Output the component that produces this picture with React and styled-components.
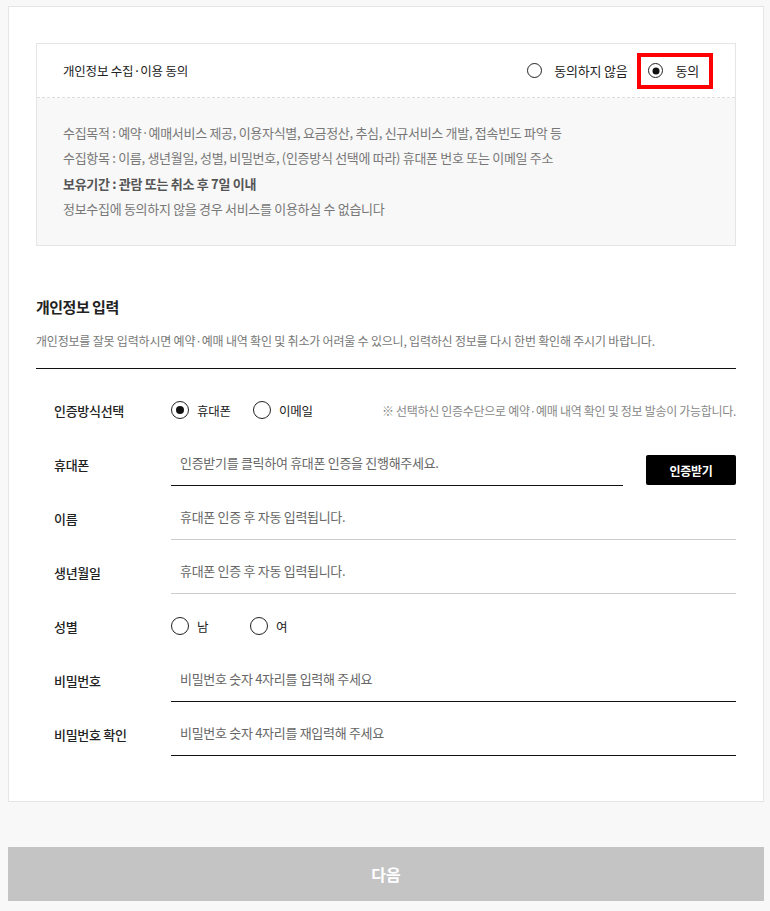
import React from "react";
import styled, { createGlobalStyle } from "styled-components";

const GlobalStyle = createGlobalStyle`
  html, body {
    margin: 0;
    padding: 0;
    background: #f8f8f8;
  }
  body {
    font-family: "Noto Sans CJK KR", "Noto Sans", sans-serif;
    color: #222;
  }
  * {
    box-sizing: border-box;
  }
`;

const Page = styled.div`
  padding: 6px 6px 10px 8px;
`;

const Panel = styled.div`
  background: #fff;
  border: 1px solid #e5e5e5;
  padding: 36px 27px 45px;
`;

/* 동의 박스 */
const AgreeBox = styled.div`
  border: 1px solid #e5e5e5;
`;

const AgreeHeader = styled.div`
  height: 54px;
  display: flex;
  align-items: center;
  justify-content: space-between;
  padding: 0 22px 0 26px;
  background: #fff;
  border-bottom: 1px dashed #ddd;
`;

const AgreeTitle = styled.span`
  font-size: 12.5px;
  letter-spacing: -0.2px;
  color: #222;
`;

const AgreeOptions = styled.div`
  display: flex;
  align-items: center;
  gap: 10px;
`;

const Option = styled.label`
  display: flex;
  align-items: center;
  gap: ${(p) => (p.$gap ? p.$gap : 12)}px;
  min-width: ${(p) => (p.$minWidth ? `${p.$minWidth}px` : "auto")};
  font-size: ${(p) => (p.$fs ? p.$fs : 12.5)}px;
  letter-spacing: -0.2px;
  color: #222;
  cursor: pointer;
`;

const Highlight = styled.div`
  display: flex;
  align-items: center;
  height: 36px;
  padding: 0 10px 0 7px;
  border: 4px solid #ff0000;
`;

const Circle = styled.span`
  position: relative;
  flex: none;
  width: ${(p) => p.$size}px;
  height: ${(p) => p.$size}px;
  border-radius: 50%;
  border: 1px solid #222;
  background: #fff;

  &::after {
    content: "";
    display: ${(p) => (p.$checked ? "block" : "none")};
    position: absolute;
    top: 50%;
    left: 50%;
    width: ${(p) => Math.round(p.$size * 0.47)}px;
    height: ${(p) => Math.round(p.$size * 0.47)}px;
    border-radius: 50%;
    background: #111;
    transform: translate(-50%, -50%);
  }
`;

const AgreeBody = styled.div`
  background: #f8f8f8;
  padding: 22px 26px 24px;
`;

const InfoLine = styled.p`
  margin: 0;
  font-size: 13px;
  line-height: 25.3px;
  letter-spacing: -0.3px;
  color: ${(p) => (p.$bold ? "#555" : "#777")};
  font-weight: ${(p) => (p.$bold ? 700 : 400)};
`;

/* 개인정보 입력 */
const Section = styled.div`
  margin-top: 51px;
`;

const SectionTitle = styled.h2`
  margin: 0;
  font-size: 15px;
  line-height: 20px;
  font-weight: 700;
  letter-spacing: -0.5px;
  color: #222;
`;

const SectionDesc = styled.p`
  margin: 15px 0 0;
  font-size: 12px;
  line-height: 18px;
  letter-spacing: -0.2px;
  color: #777;
  padding-bottom: 18px;
  border-bottom: 1px solid #111;
`;

const FormList = styled.div`
  display: flex;
  flex-direction: column;
  gap: 10px;
  padding-top: 19px;
`;

const Row = styled.div`
  display: flex;
  align-items: flex-end;
  height: 44px;
`;

const Label = styled.div`
  flex: none;
  width: 135px;
  height: 44px;
  display: flex;
  align-items: center;
  padding-left: 18px;
  font-size: 13px;
  font-weight: 500;
  letter-spacing: -0.3px;
  color: #222;
`;

const Field = styled.div`
  flex: 1;
  height: 44px;
  display: flex;
  align-items: center;
  gap: ${(p) => (p.$gap ? p.$gap : 0)}px;
`;

const Input = styled.input`
  flex: 1;
  height: 44px;
  padding: 0 0 2px 9px;
  border: none;
  border-bottom: 1px solid ${(p) => (p.$muted ? "#ccc" : "#111")};
  background: transparent;
  font-family: inherit;
  font-size: 13px;
  letter-spacing: -0.3px;
  color: #222;
  outline: none;

  &::placeholder {
    color: #666;
    opacity: 1;
  }
`;

const Note = styled.span`
  margin-left: auto;
  font-size: 12px;
  letter-spacing: -0.3px;
  color: #888;
`;

const CertButton = styled.button`
  flex: none;
  align-self: flex-end;
  width: 90px;
  height: 30px;
  margin: 0 0 1px 23px;
  border: none;
  border-radius: 2px;
  background: #000;
  color: #fff;
  font-family: inherit;
  font-size: 12px;
  font-weight: 700;
  letter-spacing: -0.3px;
  cursor: pointer;
`;

const NextButton = styled.button`
  display: block;
  width: 100%;
  height: 54px;
  margin-top: 45px;
  border: none;
  background: #c4c4c4;
  color: #fff;
  font-family: inherit;
  font-size: 16px;
  font-weight: 700;
  cursor: pointer;
`;

const Radio = ({ size = 18, checked, gap, minWidth, fontSize, children }) => (
  <Option $gap={gap} $minWidth={minWidth} $fs={fontSize}>
    <Circle $size={size} $checked={checked} />
    {children}
  </Option>
);

const App = () => {
  return (
    <Page>
      <GlobalStyle />
      <Panel>
        <AgreeBox>
          <AgreeHeader>
            <AgreeTitle>개인정보 수집·이용 동의</AgreeTitle>
            <AgreeOptions>
              <Radio size={15} fontSize={13}>
                동의하지 않음
              </Radio>
              <Highlight>
                <Radio size={15} fontSize={13} checked>
                  동의
                </Radio>
              </Highlight>
            </AgreeOptions>
          </AgreeHeader>
          <AgreeBody>
            <InfoLine>
              수집목적 : 예약·예매서비스 제공, 이용자식별, 요금정산, 추심, 신규서비스 개발, 접속빈도 파악 등
            </InfoLine>
            <InfoLine>
              수집항목 : 이름, 생년월일, 성별, 비밀번호, (인증방식 선택에 따라) 휴대폰 번호 또는 이메일 주소
            </InfoLine>
            <InfoLine $bold>보유기간 : 관람 또는 취소 후 7일 이내</InfoLine>
            <InfoLine>정보수집에 동의하지 않을 경우 서비스를 이용하실 수 없습니다</InfoLine>
          </AgreeBody>
        </AgreeBox>

        <Section>
          <SectionTitle>개인정보 입력</SectionTitle>
          <SectionDesc>
            개인정보를 잘못 입력하시면 예약·예매 내역 확인 및 취소가 어려울 수 있으니, 입력하신 정보를 다시 한번 확인해 주시기 바랍니다.
          </SectionDesc>

          <FormList>
            <Row>
              <Label>인증방식선택</Label>
              <Field $gap={22}>
                <Radio checked gap={8}>
                  휴대폰
                </Radio>
                <Radio gap={8}>이메일</Radio>
                <Note>※ 선택하신 인증수단으로 예약·예매 내역 확인 및 정보 발송이 가능합니다.</Note>
              </Field>
            </Row>
            <Row>
              <Label>휴대폰</Label>
              <Field>
                <Input placeholder="인증받기를 클릭하여 휴대폰 인증을 진행해주세요." />
                <CertButton>인증받기</CertButton>
              </Field>
            </Row>
            <Row>
              <Label>이름</Label>
              <Field>
                <Input $muted readOnly placeholder="휴대폰 인증 후 자동 입력됩니다." />
              </Field>
            </Row>
            <Row>
              <Label>생년월일</Label>
              <Field>
                <Input $muted readOnly placeholder="휴대폰 인증 후 자동 입력됩니다." />
              </Field>
            </Row>
            <Row>
              <Label>성별</Label>
              <Field>
                <Radio gap={8} minWidth={79}>
                  남
                </Radio>
                <Radio gap={8}>여</Radio>
              </Field>
            </Row>
            <Row>
              <Label>비밀번호</Label>
              <Field>
                <Input type="password" placeholder="비밀번호 숫자 4자리를 입력해 주세요" />
              </Field>
            </Row>
            <Row>
              <Label>비밀번호 확인</Label>
              <Field>
                <Input type="password" placeholder="비밀번호 숫자 4자리를 재입력해 주세요" />
              </Field>
            </Row>
          </FormList>
        </Section>
      </Panel>
      <NextButton>다음</NextButton>
    </Page>
  );
};

export default App;
